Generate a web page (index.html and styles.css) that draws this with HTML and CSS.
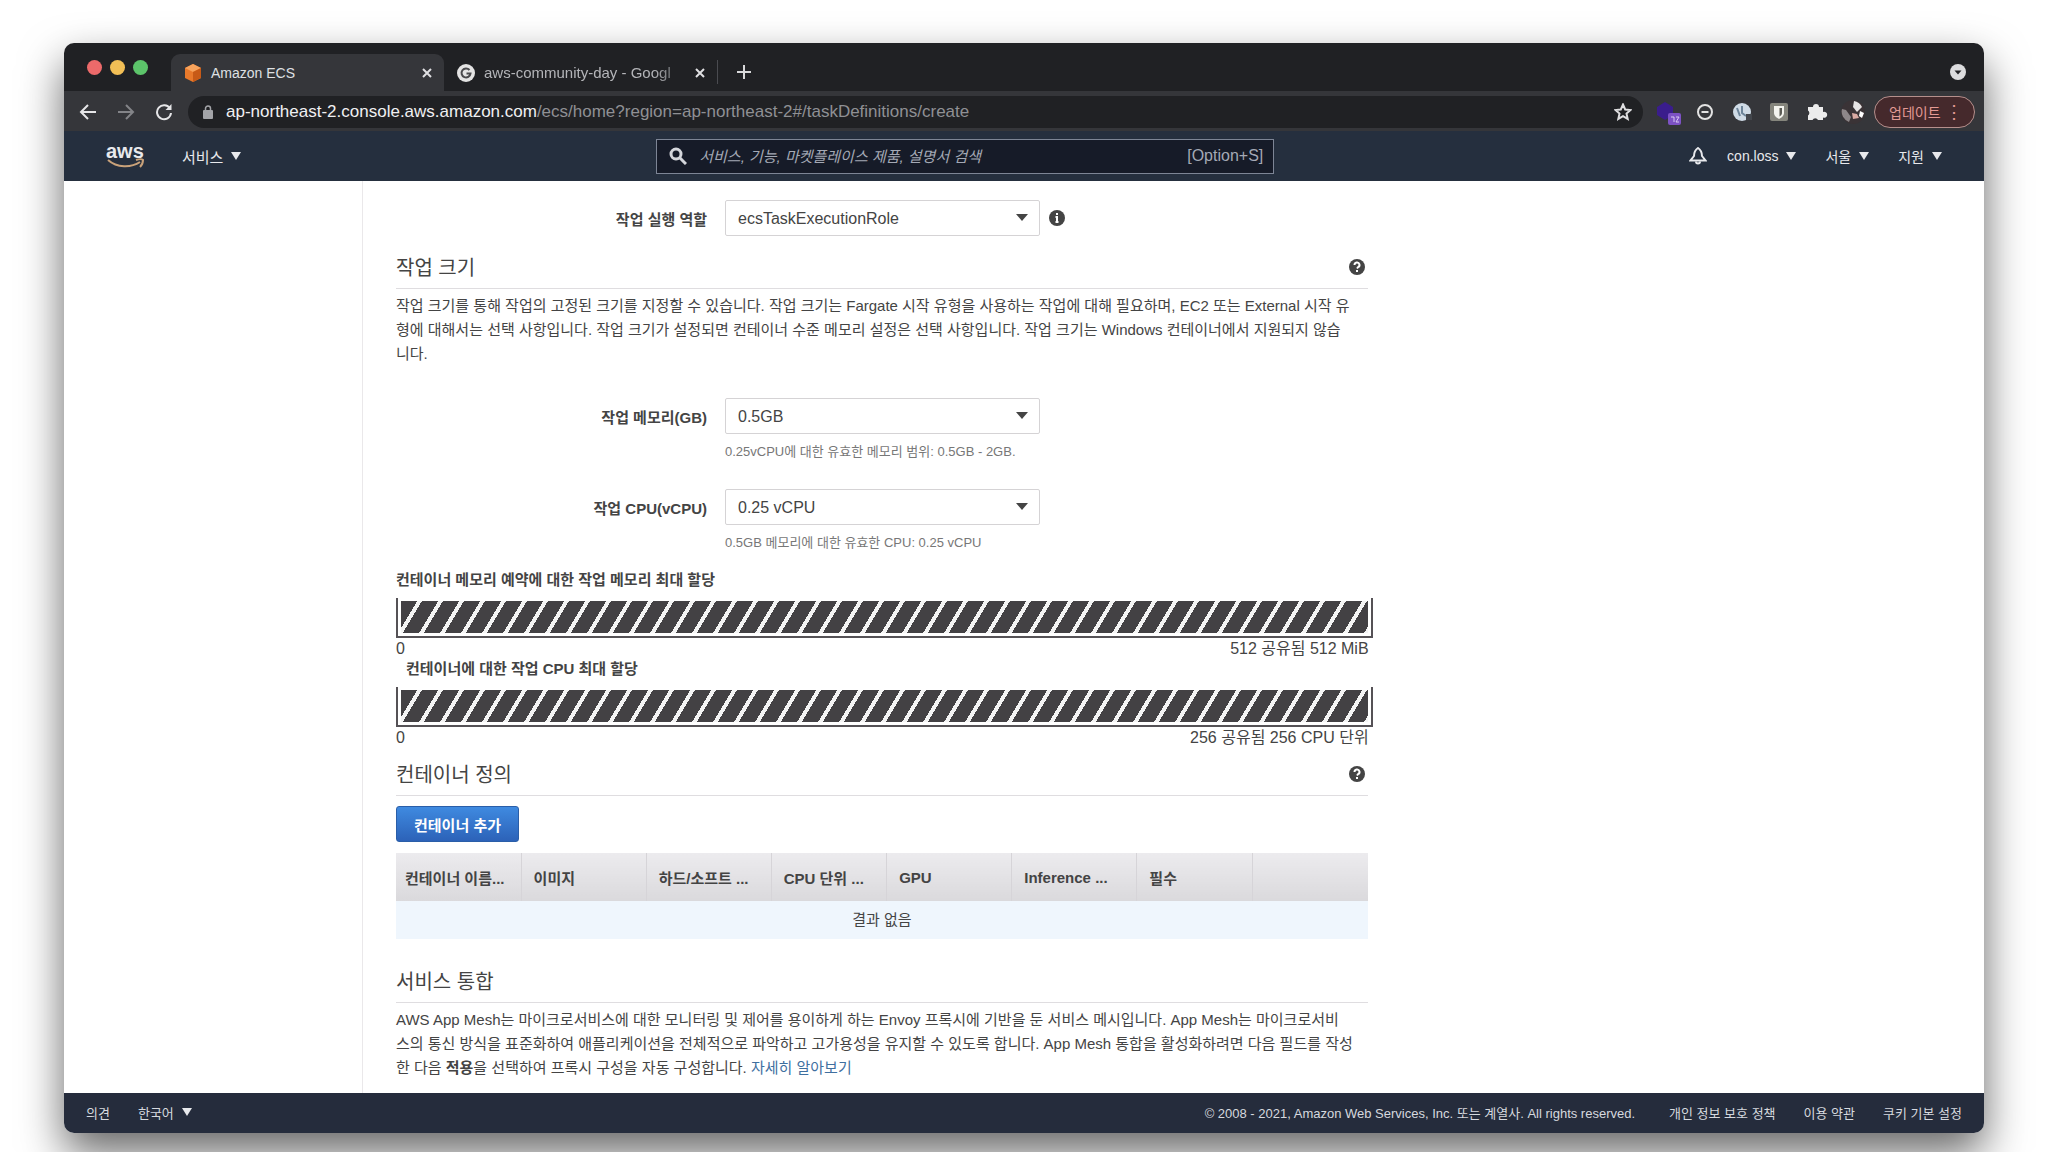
FILE: index.html
```
<!DOCTYPE html>
<html lang="ko">
  <head>
    <meta charset="UTF-8" />
    <meta name="viewport" content="width=device-width, initial-scale=1.0" />
    <link rel="stylesheet" href="styles.css">
    <title>Amazon ECS</title>
  </head>

  <body>
    <div class="window">
      <!-- Tabs -->
      <div class="tabBar">
        <div class="lights">
          <span class="light red"></span>
          <span class="light yellow"></span>
          <span class="light green"></span>
        </div>
        <div class="tab active">
          <svg class="favicon" viewBox="0 0 18 18">
            <path d="M9 0l8 4v10l-8 4-8-4V4z" fill="#e8792b" />
            <path d="M9 0l8 4-8 4-8-4z" fill="#f7a35c" />
            <path d="M9 8l8-4v10l-8 4z" fill="#c75a17" />
          </svg>
          <span class="tabTitle">Amazon ECS</span>
          <button class="tabClose" aria-label="닫기">
            <svg viewBox="0 0 10 10"><path d="M1 1l8 8M9 1l-8 8" /></svg>
          </button>
        </div>
        <div class="tab">
          <svg class="favicon" viewBox="0 0 18 18">
            <circle cx="9" cy="9" r="9" fill="#e4e4e4" />
            <path d="M12.500 6A4.500 4.500 0 1 0 13.500 9.500H9.500" fill="none" stroke="#4a4a4d" stroke-width="2" />
          </svg>
          <span class="tabTitle fade">aws-community-day - Googl</span>
          <button class="tabClose" aria-label="닫기">
            <svg viewBox="0 0 10 10"><path d="M1 1l8 8M9 1l-8 8" /></svg>
          </button>
        </div>
        <button class="newTab" aria-label="새 탭">
          <svg viewBox="0 0 14 14"><path d="M7 0v14M0 7h14" /></svg>
        </button>
        <svg class="tabSearch" viewBox="0 0 16 16">
          <circle cx="8" cy="8" r="8" fill="#dcdcde" />
          <path d="M4.500 6.500h7L8 10.500z" fill="#202024" />
        </svg>
      </div>

      <!-- Address bar -->
      <div class="toolbar">
        <div class="navButtons">
          <button aria-label="뒤로">
            <svg viewBox="0 0 18 18"><path d="M17 9H2M9 2L2 9l7 7" /></svg>
          </button>
          <button class="dim" aria-label="앞으로">
            <svg viewBox="0 0 18 18"><path d="M1 9h15M9 2l7 7-7 7" /></svg>
          </button>
          <button aria-label="새로고침">
            <svg viewBox="0 0 18 18"><path d="M15 5.500A7 7 0 1 0 16 10" /><path d="M16.500 1v6h-6z" fill="#e6e6e8" stroke="none" /></svg>
          </button>
        </div>
        <div class="addressBar">
          <svg class="lock" viewBox="0 0 12 14">
            <rect x="1" y="5" width="10" height="9" rx="1" fill="#a3a4a8" />
            <path d="M3.500 6V3.500a2.500 2.500 0 0 1 5 0V6" fill="none" stroke="#a3a4a8" stroke-width="1.500" />
          </svg>
          <span class="url"><span class="host">ap-northeast-2.console.aws.amazon.com</span>/ecs/home?region=ap-northeast-2#/taskDefinitions/create</span>
          <svg class="star" viewBox="0 0 18 18">
            <path d="M9 1.500l2.200 5 5.300.5-4 3.600 1.200 5.300L9 13.200l-4.700 2.700 1.200-5.300-4-3.600 5.300-.5z" />
          </svg>
        </div>
        <div class="extensions">
          <svg viewBox="0 0 26 26">
            <path d="M10 3l8 5v8l-8 5-8-5V8z" fill="#3a1d8c" />
            <rect x="13" y="14" width="13" height="12" rx="2" fill="#7d52c4" />
            <path d="M16 18h3v5M21 18h3l-3 5h3" fill="none" stroke="#d9c9f2" />
          </svg>
          <svg viewBox="0 0 26 26">
            <circle cx="13" cy="13" r="7" fill="none" stroke="#e2e2e2" stroke-width="2" />
            <path d="M9.500 13h7" stroke="#e2e2e2" stroke-width="2" />
          </svg>
          <svg viewBox="0 0 26 26">
            <circle cx="13" cy="13" r="9" fill="#cfdbe6" />
            <path d="M13 7v7l4 3M8 9l3 8" fill="none" stroke="#6c8499" stroke-width="2" />
            <rect x="17" y="15" width="6" height="6" fill="#43474d" />
          </svg>
          <svg viewBox="0 0 26 26">
            <rect x="4" y="4" width="18" height="18" rx="2" fill="#85857c" />
            <path d="M8 7h10v7c0 3-3 5-5 6-2-1-5-3-5-6z" fill="#f4f4ee" />
            <path d="M13.500 9H16v5c0 1.500-1 2.500-2.500 3.500z" fill="#5c5c55" />
          </svg>
          <svg viewBox="0 0 26 26">
            <path d="M5 8h5a3 3 0 1 1 6 0h4v5a3 3 0 1 1 0 5.500V21h-5a3 3 0 0 0-5.500 0H5v-4.500a3 3 0 0 0 0-5z" fill="#ececec" />
          </svg>
          <svg viewBox="0 0 26 26">
            <circle cx="13" cy="13" r="12" fill="#3a3336" />
            <path d="M14 2a11 11 0 0 1 8 6l-5 5-4-5z" fill="#e8e4e4" />
            <path d="M2 10l4 1 5 7-2 5a11 11 0 0 1-7-13z" fill="#8d8789" />
            <path d="M12 14l5 1 2 4-6 1z" fill="#d9aaa3" />
            <path d="M20 12l4 2-2 5-3-2z" fill="#fff" />
          </svg>
        </div>
        <button class="update">업데이트 <span class="dots">⋮</span></button>
      </div>

      <!-- AWS header -->
      <header class="awsHeader">
        <a class="logo" href="#" aria-label="AWS">
          <span>aws</span>
          <svg viewBox="0 0 38 11">
            <path d="M2 2c9 8 23 8 32 2" fill="none" stroke="#c9a27a" stroke-width="2" />
            <path d="M30 2c3-1 6-1 7 0 0 2-1 5-3 7" fill="none" stroke="#c9a27a" stroke-width="2" />
          </svg>
        </a>
        <a class="menu services" href="#">서비스 <i class="caret"></i></a>
        <div class="searchBox">
          <svg viewBox="0 0 18 18"><circle cx="7" cy="7" r="5" /><path d="M11 11l6 6" /></svg>
          <input type="text" aria-label="검색" placeholder="서비스, 기능, 마켓플레이스 제품, 설명서 검색">
          <span>[Option+S]</span>
        </div>
        <nav class="account">
          <a href="#" aria-label="알림">
            <svg class="bell" viewBox="0 0 18 18"><path d="M9 1C6 3 5 6 5 9l-3.500 4.500h15L13 9c0-3-1-6-4-8z" /><path d="M7 14.500a2 2 0 0 0 4 0" /></svg>
          </a>
          <a class="menu" href="#">con.loss <i class="caret"></i></a>
          <a class="menu" href="#">서울 <i class="caret"></i></a>
          <a class="menu" href="#">지원 <i class="caret"></i></a>
        </nav>
      </header>

      <div class="page">
        <aside class="sidebar"></aside>
        <main class="content">
          <div class="formRow">
            <label for="role">작업 실행 역할</label>
            <div class="selectBox">
              <select id="role"><option>ecsTaskExecutionRole</option></select>
            </div>
            <svg class="info" viewBox="0 0 16 16">
              <circle cx="8" cy="8" r="8" />
              <path d="M8 3v2M6.500 7H8v5M6.500 12h3" />
            </svg>
          </div>

          <div class="sectionTitle">
            <h2>작업 크기</h2>
            <svg class="info" viewBox="0 0 16 16">
              <circle cx="8" cy="8" r="8" />
              <path d="M5.500 6a2.500 2.500 0 1 1 3.500 2.200L8 9.500M8 11v2" />
            </svg>
          </div>
          <p>작업 크기를 통해 작업의 고정된 크기를 지정할 수 있습니다. 작업 크기는 Fargate 시작 유형을 사용하는 작업에 대해 필요하며, EC2 또는 External 시작 유<br>형에 대해서는 선택 사항입니다. 작업 크기가 설정되면 컨테이너 수준 메모리 설정은 선택 사항입니다. 작업 크기는 Windows 컨테이너에서 지원되지 않습<br>니다.</p>

          <div class="formRow memory">
            <label for="memory">작업 메모리(GB)</label>
            <div class="selectBox">
              <select id="memory"><option>0.5GB</option></select>
            </div>
            <span class="help">0.25vCPU에 대한 유효한 메모리 범위: 0.5GB - 2GB.</span>
          </div>
          <div class="formRow cpu">
            <label for="cpu">작업 CPU(vCPU)</label>
            <div class="selectBox">
              <select id="cpu"><option>0.25 vCPU</option></select>
            </div>
            <span class="help">0.5GB 메모리에 대한 유효한 CPU: 0.25 vCPU</span>
          </div>

          <div class="allocations">
            <h3>컨테이너 메모리 예약에 대한 작업 메모리 최대 할당</h3>
            <div class="bar"><div class="stripes"></div></div>
            <div class="scale"><span>0</span><span>512 공유됨 512 MiB</span></div>
            <h3 class="indent">컨테이너에 대한 작업 CPU 최대 할당</h3>
            <div class="bar"><div class="stripes"></div></div>
            <div class="scale"><span>0</span><span>256 공유됨 256 CPU 단위</span></div>
          </div>

          <div class="sectionTitle containers">
            <h2>컨테이너 정의</h2>
            <svg class="info" viewBox="0 0 16 16">
              <circle cx="8" cy="8" r="8" />
              <path d="M5.500 6a2.500 2.500 0 1 1 3.500 2.200L8 9.500M8 11v2" />
            </svg>
          </div>
          <button class="addButton">컨테이너 추가</button>
          <table>
            <thead>
              <tr>
                <th>컨테이너 이름...</th>
                <th>이미지</th>
                <th>하드/소프트 ...</th>
                <th>CPU 단위 ...</th>
                <th>GPU</th>
                <th>Inference ...</th>
                <th>필수</th>
                <th></th>
              </tr>
            </thead>
            <tbody>
              <tr>
                <td colspan="8">결과 없음</td>
              </tr>
            </tbody>
          </table>

          <div class="sectionTitle integration">
            <h2>서비스 통합</h2>
          </div>
          <p>AWS App Mesh는 마이크로서비스에 대한 모니터링 및 제어를 용이하게 하는 Envoy 프록시에 기반을 둔 서비스 메시입니다. App Mesh는 마이크로서비<br>스의 통신 방식을 표준화하여 애플리케이션을 전체적으로 파악하고 고가용성을 유지할 수 있도록 합니다. App Mesh 통합을 활성화하려면 다음 필드를 작성<br>한 다음 <b>적용</b>을 선택하여 프록시 구성을 자동 구성합니다. <a href="#">자세히 알아보기</a></p>
        </main>
      </div>

      <footer>
        <a href="#">의견</a>
        <a class="menu" href="#">한국어 <i class="caret"></i></a>
        <span class="copyright">© 2008 - 2021, Amazon Web Services, Inc. 또는 계열사. All rights reserved.</span>
        <a href="#">개인 정보 보호 정책</a>
        <a href="#">이용 약관</a>
        <a href="#">쿠키 기본 설정</a>
      </footer>
    </div>
  </body>
</html>
```
FILE: styles.css
```
* {
  box-sizing: border-box;
}
body {
  margin: 0;
  padding: 43px 64px 20px;
  min-height: 100vh;
  display: flex;
  background-color: #fff;
  font-family: "Liberation Sans", "Noto Sans CJK KR", sans-serif;
  font-size: 16px;
  color: #444;
}
button, input, select {
  font-family: inherit;
}
button {
  border: none;
  padding: 0;
  background: none;
  cursor: pointer;
}
svg {
  display: block;
  flex: none;
}
a {
  color: inherit;
  text-decoration: none;
}
.window {
  flex: 1;
  min-width: 0;
  display: flex;
  flex-direction: column;
  border-radius: 10px;
  overflow: hidden;
  background-color: #fff;
  box-shadow: 0 20px 44px rgba(0, 0, 0, 0.6);
}

/* tabs */
.tabBar {
  display: flex;
  align-items: flex-end;
  height: 48px;
  padding-right: 18px;
  background-color: #202124;
}
.lights {
  display: flex;
  gap: 8px;
  width: 107px;
  padding-left: 23px;
  margin-bottom: 16px;
}
.light {
  width: 15px;
  height: 15px;
  border-radius: 50%;
}
.red {
  background-color: #ec6a6a;
}
.yellow {
  background-color: #f2bf56;
}
.green {
  background-color: #5cc46a;
}
.tab {
  display: flex;
  align-items: center;
  width: 273px;
  height: 37px;
  padding: 0 12px 0 13px;
  font-size: 14px;
  color: #b4b5b9;
}
.tab.active {
  background-color: #35363a;
  border-radius: 9px 9px 0 0;
  color: #dfe0e3;
}
.favicon {
  width: 18px;
  height: 18px;
  margin-right: 9px;
}
.tabTitle {
  flex: 1;
  white-space: nowrap;
}
.fade {
  font-size: 15px;
  -webkit-mask-image: linear-gradient(to right, #000 80%, transparent);
  mask-image: linear-gradient(to right, #000 80%, transparent);
}
.tabClose svg {
  width: 10px;
  height: 10px;
  stroke: #e0e0e2;
  stroke-width: 2;
}
.newTab {
  padding: 5px 19px;
  margin-bottom: 7px;
  border-left: 1px solid #4a4b50;
}
.newTab svg {
  width: 14px;
  height: 14px;
  stroke: #d8d8da;
  stroke-width: 2;
}
.tabSearch {
  width: 16px;
  height: 16px;
  margin: 0 0 11px auto;
}

/* toolbar */
.toolbar {
  display: flex;
  align-items: center;
  height: 40px;
  padding: 2px 9px 0 15px;
  background-color: #35363a;
}
.navButtons {
  display: flex;
  gap: 20px;
  width: 109px;
}
.navButtons svg {
  width: 18px;
  height: 18px;
  fill: none;
  stroke: #e6e6e8;
  stroke-width: 2;
}
.navButtons .dim svg {
  stroke: #838488;
}
.addressBar {
  flex: 1;
  display: flex;
  align-items: center;
  height: 32px;
  padding: 0 11px 0 14px;
  border-radius: 16px;
  background-color: #202124;
}
.lock {
  width: 12px;
  height: 14px;
  margin-right: 12px;
}
.url {
  flex: 1;
  font-size: 17px;
  color: #8f9094;
  white-space: nowrap;
}
.host {
  color: #f0f0f2;
}
.star {
  width: 18px;
  height: 18px;
  fill: none;
  stroke: #dedee0;
  stroke-width: 2;
}
.extensions {
  display: flex;
  gap: 11px;
  margin: 0 8px 0 12px;
}
.extensions svg {
  width: 26px;
  height: 26px;
}
.update {
  display: flex;
  align-items: center;
  justify-content: space-between;
  width: 101px;
  height: 32px;
  padding: 0 11px 0 14px;
  border: 1px solid #b58f8c;
  border-radius: 16px;
  background-color: #45292c;
  color: #e39a94;
  font-size: 14px;
}
.dots {
  font-size: 18px;
}

/* aws header */
.awsHeader {
  display: flex;
  align-items: center;
  height: 50px;
  padding: 0 42px;
  background-color: #252f3e;
  color: #e8e9ec;
  font-size: 14px;
}
.logo {
  width: 76px;
  font-size: 20px;
  font-weight: bold;
  line-height: 14px;
}
.logo span {
  display: block;
}
.logo svg {
  width: 38px;
  height: 11px;
}
.menu {
  display: flex;
  align-items: center;
  gap: 8px;
}
.caret {
  border: 5px solid transparent;
  border-top: 8px solid #e8e9ec;
  border-bottom: none;
}
.services {
  font-size: 15px;
}
.searchBox {
  display: flex;
  align-items: center;
  width: 618px;
  height: 35px;
  margin: 0 auto;
  padding: 0 10px 0 12px;
  border: 1px solid #7d8595;
  background-color: #161b28;
  color: #a4a9b5;
}
.searchBox svg {
  width: 18px;
  height: 18px;
  fill: none;
  stroke: #d4d6db;
  stroke-width: 3;
}
.searchBox input {
  flex: 1;
  padding: 0 0 0 12px;
  border: none;
  background: none;
  font-size: 15px;
}
.searchBox input::placeholder {
  color: #a4a9b5;
  font-style: italic;
}
.searchBox span {
  font-size: 16px;
}
.account {
  display: flex;
  align-items: center;
  gap: 29px;
}
.bell {
  width: 18px;
  height: 18px;
  margin-right: -9px;
  fill: none;
  stroke: #e8e9ec;
  stroke-width: 2;
}

/* page */
.page {
  flex: 1;
  display: flex;
}
.sidebar {
  width: 299px;
  border-right: 1px solid #eae8ea;
}
.content {
  flex: 1;
  padding: 19px 0 13px 33px;
}
.sectionTitle, .content p, table {
  width: 61.2%;
}
.formRow {
  display: grid;
  grid-template-columns: 311px 315px auto;
  column-gap: 18px;
  align-items: center;
}
.formRow label {
  text-align: right;
  font-size: 15px;
  font-weight: bold;
}
.formRow .info {
  margin-left: -9px;
}
.selectBox {
  position: relative;
}
.selectBox::after {
  content: "";
  position: absolute;
  right: 12px;
  top: 14px;
  border: 6px solid transparent;
  border-top: 7px solid #444;
  border-bottom: none;
  pointer-events: none;
}
select {
  appearance: none;
  display: block;
  width: 100%;
  height: 36px;
  padding: 0 12px;
  border: 1px solid #d5d3d5;
  border-radius: 2px;
  background-color: #fff;
  color: #444;
  font-size: 16px;
}
.info {
  width: 16px;
  height: 16px;
  fill: #444;
}
.info path {
  fill: none;
  stroke: #fff;
  stroke-width: 2;
}
.help {
  grid-column: 2 / 4;
  margin-top: 6px;
  line-height: 24px;
  font-size: 13px;
  color: #777;
}
.memory {
  margin-top: 32px;
}
.cpu {
  margin-top: 25px;
}
.sectionTitle {
  display: flex;
  justify-content: space-between;
  margin-top: 18px;
  padding: 0 3px 6px 0;
  border-bottom: 1px solid #dfdde0;
}
.sectionTitle .info {
  margin-top: 5px;
}
h2 {
  margin: 0;
  line-height: 28px;
  font-size: 20px;
  font-weight: normal;
}
.content p {
  margin: 5px 0 0;
  line-height: 24px;
  font-size: 15px;
  white-space: nowrap;
}
.content p a {
  color: #3f6f9f;
}
.allocations {
  width: 61.5%;
  margin-top: 16px;
}
h3 {
  margin: 0 0 9px;
  line-height: 18px;
  font-size: 15px;
}
.indent {
  padding-left: 10px;
}
.bar {
  height: 40px;
  padding: 3px 3px 0;
  border: 2px solid #555256;
  border-top: none;
}
.stripes {
  height: 32px;
  background: repeating-linear-gradient(121deg, #434144 0 14px, #f4f4f4 14px 18px);
}
.scale {
  display: flex;
  justify-content: space-between;
  padding-right: 4px;
  line-height: 22px;
}
.containers {
  margin-top: 12px;
}
.addButton {
  display: block;
  width: 123px;
  height: 36px;
  margin: 10px 0 11px;
  border: 1px solid #2a5ea8;
  border-radius: 3px;
  background: linear-gradient(#3f8ae0, #2c62b8);
  color: #fff;
  font-size: 15px;
  font-weight: bold;
}
table {
  table-layout: fixed;
  border-collapse: collapse;
}
th {
  width: 13%;
  height: 48px;
  padding: 0 0 0 12px;
  border-left: 1px solid #d6d4d8;
  background: linear-gradient(#ecebee, #dad9dc);
  font-size: 15px;
  text-align: left;
  white-space: nowrap;
}
th:first-child {
  padding-left: 9px;
  border-left: none;
}
th:nth-child(4), th:nth-child(7), th:nth-child(8) {
  width: 12%;
}
td {
  height: 38px;
  padding: 0 0 4px;
  background-color: #eff6fd;
  font-size: 15px;
  text-align: center;
}
.integration {
  margin-top: 29px;
}

footer {
  display: flex;
  align-items: center;
  gap: 28px;
  height: 40px;
  padding: 0 22px 2px;
  background-color: #252c3c;
  color: #d6d9df;
  font-size: 13px;
}
.copyright {
  margin: 0 6px 0 auto;
}
```
